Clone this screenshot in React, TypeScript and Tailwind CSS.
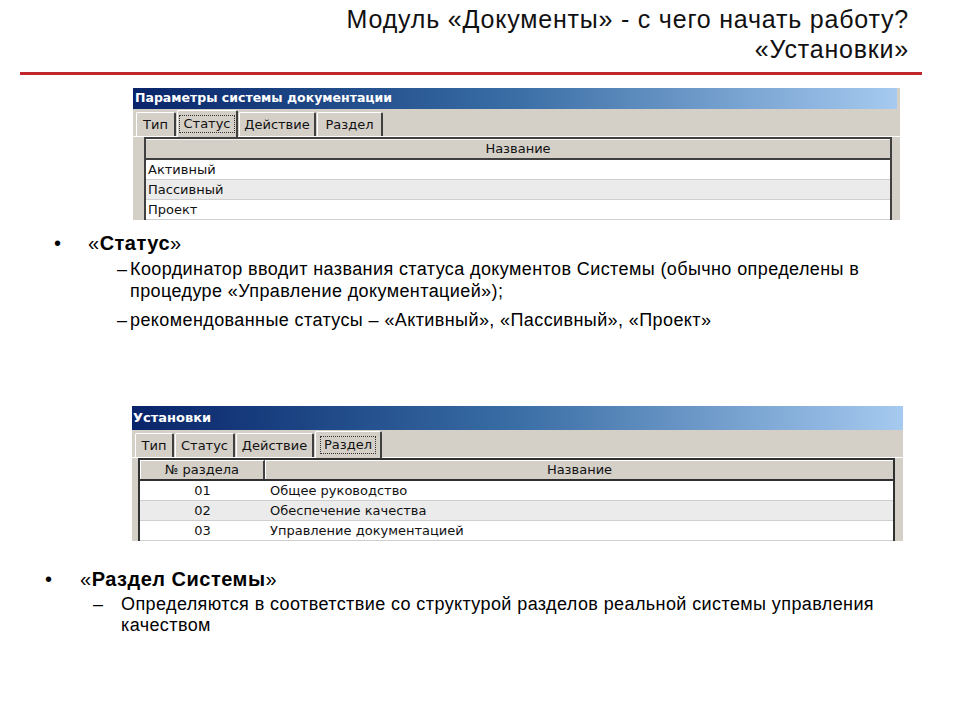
import React from "react";

const winFont = { fontFamily: '"DejaVu Sans", Tahoma, sans-serif' };

function Tab({ label, selected, w }: { label: string; selected?: boolean; w: number }) {
  return (
    <div
      className={
        "flex items-center justify-center border-l border-t border-white border-r-2 border-r-[#404040] bg-[#d4d0c8] rounded-t-[2px] " +
        (selected ? "h-[27px] -mb-[1px] z-10" : "h-[24px]")
      }
      style={{ width: w }}
    >
      <span
        className={
          "text-[13px] leading-[16px] text-[#111] px-[3px] " +
          (selected ? "border border-dotted border-[#333]" : "border border-transparent")
        }
        style={winFont}
      >
        {label}
      </span>
    </div>
  );
}

function Shot1() {
  const rows = ["Активный", "Пассивный", "Проект"];
  return (
    <div className="ml-[133px] mt-[13px] w-[767px] h-[132px] bg-[#d4d0c8] overflow-hidden flex flex-col">
      <div
        className="h-[22px] mr-[3px] bg-gradient-to-r from-[#0a246a] via-[#3a6ea5] to-[#a6caf0] flex items-center pl-[2px] text-white font-bold text-[12.5px]"
        style={winFont}
      >
        Параметры системы документации
      </div>
      <div className="h-[29px] flex items-end pl-[3px] gap-[1px] border-b border-white">
        <Tab label="Тип" w={40} />
        <Tab label="Статус" selected w={61} />
        <Tab label="Действие" w={77} />
        <Tab label="Раздел" w={66} />
      </div>
      <div className="ml-[11px] w-[748px] flex-1 bg-white border-l-2 border-t-2 border-r-2 border-[#404040] flex flex-col">
        <div className="h-[21px] bg-[#d4d0c8] border-t border-t-[#f4f4f0] border-b-2 border-b-[#404040] flex items-center justify-center text-[13px] text-[#111]" style={winFont}>
          Название
        </div>
        {rows.map((r, i) => (
          <div
            key={r}
            className={
              "h-[20px] flex items-center pl-[2px] text-[13px] text-[#111] border-b border-[#cfcfcf] shrink-0 " +
              (i === 1 ? "bg-[#ebebeb]" : "bg-white")
            }
            style={winFont}
          >
            {r}
          </div>
        ))}
      </div>
    </div>
  );
}

function Shot2() {
  const rows = [
    ["01", "Общее руководство"],
    ["02", "Обеспечение качества"],
    ["03", "Управление документацией"],
  ];
  return (
    <div className="ml-[132px] w-[771px] h-[135px] bg-[#d4d0c8] overflow-hidden flex flex-col">
      <div
        className="h-[24px] bg-gradient-to-r from-[#0a246a] via-[#3a6ea5] to-[#a6caf0] flex items-center pl-[1px] text-white font-bold text-[13px]"
        style={winFont}
      >
        Установки
      </div>
      <div className="h-[29px] flex items-end pl-[3px] gap-[1px] border-b border-white">
        <Tab label="Тип" w={39} />
        <Tab label="Статус" w={60} />
        <Tab label="Действие" w={78} />
        <Tab label="Раздел" selected w={67} />
      </div>
      <div className="ml-[6px] w-[757px] flex-1 bg-white border-l-2 border-t-2 border-r-2 border-[#303030] flex flex-col">
        <div className="h-[21px] flex border-b-2 border-b-[#303030] text-[13px] text-[#111] shrink-0" style={winFont}>
          <div className="w-[125px] bg-[#d4d0c8] border-t border-l border-white border-r-2 border-r-[#404040] flex items-center justify-center">
            № раздела
          </div>
          <div className="flex-1 bg-[#d4d0c8] border-t border-l border-white flex items-center justify-center">
            Название
          </div>
        </div>
        {rows.map(([n, t], i) => (
          <div
            key={n}
            className={
              "h-[20px] flex items-center text-[13px] text-[#111] border-b border-[#cfcfcf] shrink-0 " +
              (i === 1 ? "bg-[#ebebeb]" : "bg-white")
            }
            style={winFont}
          >
            <div className="w-[125px] text-center">{n}</div>
            <div className="pl-[5px]">{t}</div>
          </div>
        ))}
      </div>
    </div>
  );
}

export default function App() {
  const body = { fontFamily: '"Liberation Sans", Arial, sans-serif' };
  return (
    <div className="w-[960px] h-[720px] bg-white overflow-hidden flex flex-col text-black" style={body}>
      <div className="pt-[4px] pr-[51px] text-right text-[25px] leading-[30px] tracking-[0.8px] text-[#111]">
        <div>Модуль «Документы» - с чего начать работу?</div>
        <div>«Установки»</div>
      </div>
      <div className="mt-[8px] ml-[20px] w-[902px] h-[3px] bg-[#c0272d]" />
      <Shot1 />

      <div className="mt-[12px]">
        <div className="flex text-[20px] leading-[22px] tracking-[0.5px]">
          <span className="w-[88px] pl-[54px]">•</span>
          <span>
            «<b>Статус</b>»
          </span>
        </div>
        <div className="mt-[4px] flex text-[18px] leading-[22px] tracking-[0.4px]">
          <span className="w-[130px] pl-[117px]">–</span>
          <span className="w-[760px]">
            Координатор вводит названия статуса документов Системы (обычно определены в процедуре «Управление документацией»);
          </span>
        </div>
        <div className="mt-[7px] flex text-[18px] leading-[22px] tracking-[0.4px]">
          <span className="w-[130px] pl-[117px]">–</span>
          <span>рекомендованные статусы – «Активный», «Пассивный», «Проект»</span>
        </div>
      </div>

      <div className="mt-[75px]">
        <Shot2 />
      </div>

      <div className="mt-[27px]">
        <div className="flex text-[20px] leading-[22px] tracking-[0.5px]">
          <span className="w-[80px] pl-[45px]">•</span>
          <span>
            «<b>Раздел Системы</b>»
          </span>
        </div>
        <div className="mt-[4px] flex text-[18px] leading-[21px] tracking-[0.4px]">
          <span className="w-[121px] pl-[93px]">–</span>
          <span className="w-[770px]">
            Определяются в соответствие со структурой разделов реальной системы управления качеством
          </span>
        </div>
      </div>
    </div>
  );
}
